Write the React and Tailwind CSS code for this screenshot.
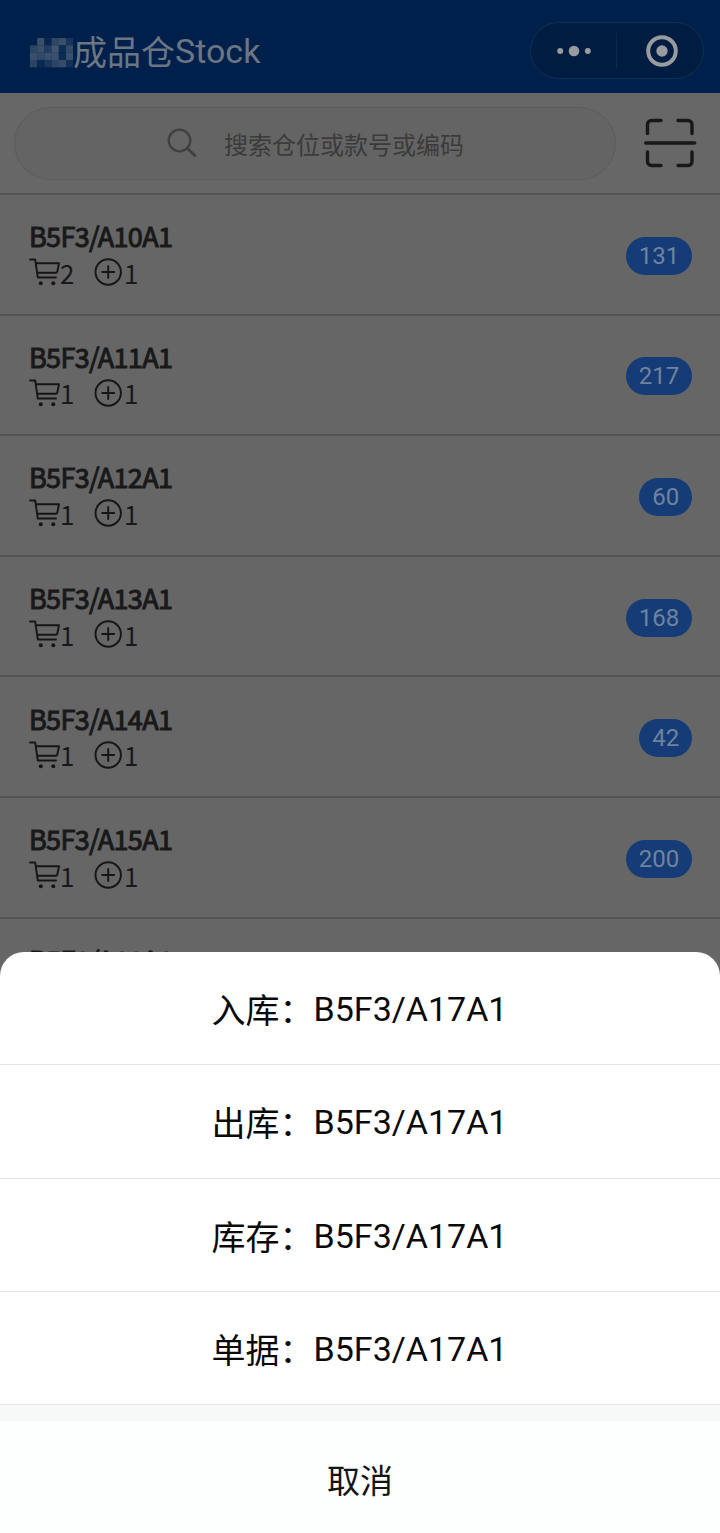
import React from 'react';

const rows = [
  { code: 'B5F3/A10A1', cart: 2, add: 1, total: 131 },
  { code: 'B5F3/A11A1', cart: 1, add: 1, total: 217 },
  { code: 'B5F3/A12A1', cart: 1, add: 1, total: 60 },
  { code: 'B5F3/A13A1', cart: 1, add: 1, total: 168 },
  { code: 'B5F3/A14A1', cart: 1, add: 1, total: 42 },
  { code: 'B5F3/A15A1', cart: 1, add: 1, total: 200 },
  { code: 'B5F3/A16A1', cart: 1, add: 1, total: 96 },
];

const actions = ['入库', '出库', '库存', '单据'];

// Mosaic cells hiding the company name: [column, row, colour]
const mosaic = [
  [1, 0, '#3a5069'], [2, 0, '#0a2650'], [3, 0, '#2f4663'], [4, 0, '#3a5069'], [5, 0, '#17345b'],
  [0, 1, '#2c4562'], [1, 1, '#3a5069'], [2, 1, '#223d60'], [3, 1, '#40556e'], [4, 1, '#0f2c57'], [5, 1, '#334b66'],
  [0, 2, '#3a5069'], [1, 2, '#33496a'], [2, 2, '#3b506b'], [3, 2, '#3b506b'], [4, 2, '#0d2a55'], [5, 2, '#3a5069'],
  [0, 3, '#2a4463'], [1, 3, '#0b2852'], [2, 3, '#1a365b'], [3, 3, '#2d4564'], [4, 3, '#354b68'], [5, 3, '#12305a'],
];

function Mosaic() {
  return (
    <svg className="mt-1 h-[30px] w-[43px]" viewBox="0 0 43 30">
      {mosaic.map(([x, y, fill]) => (
        <rect key={`${x}-${y}`} x={x * 7.2} y={y * 7.3} width="7.3" height="7.4" fill={fill} />
      ))}
    </svg>
  );
}

function CartIcon() {
  return (
    <svg className="h-[28px] w-[32px]" viewBox="0 0 32 28" fill="none" stroke="#161616" strokeWidth="1.9" strokeLinecap="round" strokeLinejoin="round">
      <path d="M1 1.500h5.200l2.600 18h18.200M6.700 5.200h23.300l-1.700 8.300a1.500 1.500 0 0 1-1.500 1.200H8.100" />
      <circle cx="11.800" cy="25.200" r="2" fill="#161616" stroke="none" />
      <circle cx="24.300" cy="25.200" r="2" fill="#161616" stroke="none" />
    </svg>
  );
}

function PlusIcon() {
  return (
    <svg className="h-[28px] w-[28px]" viewBox="0 0 28 28" fill="none" stroke="#161616" strokeWidth="1.9" strokeLinecap="round">
      <circle cx="14.200" cy="14" r="12.700" />
      <path d="M14.200 8v12M8.200 14h12" />
    </svg>
  );
}

function ScanIcon() {
  return (
    <svg className="mt-0.5 h-[52px] w-[54px]" viewBox="0 0 54 52" fill="none" stroke="#171918" strokeWidth="3.4" strokeLinecap="round">
      <path d="M3.5 15.5V6.5a4 4 0 0 1 4-4h9.5M34 2.500h10a4 4 0 0 1 4 4v9M3.500 34v9.500a4 4 0 0 0 4 4h9.500M34 47.500h10a4 4 0 0 0 4-4V34M1.700 25h49" />
    </svg>
  );
}

export default function App() {
  return (
    <div className="relative flex h-[1533px] w-[720px] flex-col overflow-hidden bg-[#666666] font-['Noto_Sans_CJK_SC',sans-serif]">
      <header className="flex h-[93px] shrink-0 items-start bg-[#00204c] pl-[30px] pr-4">
        <div className="flex flex-1 items-center pt-[27px]">
          <Mosaic />
          <h1 className="font-[Roboto,sans-serif] text-[34px] leading-[48px] text-[#6b7682]">
            <span className="align-[-2px] font-['Noto_Sans_CJK_SC',sans-serif] leading-none">成品仓</span>Stock
          </h1>
        </div>
        <div className="mt-[22px] flex h-[57px] w-[174px] items-center rounded-full border border-[#0d3352] bg-[#001c40]">
          <div className="flex w-[85px] items-center justify-center">
            <svg className="h-3 w-9" viewBox="0 0 36 12" fill="#989ba0">
              <circle cx="4.200" cy="6" r="3" />
              <circle cx="18" cy="6" r="5.300" />
              <circle cx="31.800" cy="6" r="3" />
            </svg>
          </div>
          <div className="h-9 w-px bg-[#092b4b]" />
          <div className="flex flex-1 items-center justify-center pl-[4px]">
            <svg className="h-8 w-8" viewBox="0 0 32 32">
              <circle cx="16" cy="16" r="13.800" fill="none" stroke="#989ba0" strokeWidth="4" />
              <circle cx="16" cy="16" r="5.700" fill="#989ba0" />
            </svg>
          </div>
        </div>
      </header>

      <div className="flex h-[102px] shrink-0 items-center border-b-2 border-[#535353] bg-[#676767] pl-3.5 pr-[22px]">
        <div className="flex h-[73px] w-[602px] items-center rounded-full border border-[#5c5c5c] bg-[#646464] pl-[151px]">
          <svg className="h-8 w-8" viewBox="0 0 32 32" fill="none" stroke="#404040" strokeWidth="2.200" strokeLinecap="round">
            <circle cx="13.500" cy="13.500" r="10.800" />
            <path d="m21.500 21.500 7.300 7" strokeWidth="3" />
          </svg>
          <span className="ml-[26px] pt-0.5 text-[24px] leading-9 text-[#3b3b3b]">搜索仓位或款号或编码</span>
        </div>
        <div className="ml-auto">
          <ScanIcon />
        </div>
      </div>

      <main className="flex flex-col">
        {rows.map((row) => (
          <div key={row.code} className="flex h-[120.600px] shrink-0 items-center justify-between border-b-2 border-[#535353] pl-[29px] pr-7">
            <div className="flex flex-col">
              <div className="-mt-px text-[27px] leading-[37px] tracking-[-0.650px] text-[#191919] [-webkit-text-stroke:1px_#191919]">{row.code}</div>
              <div className="flex h-9 items-center text-[26px] leading-9 text-[#191919]">
                <CartIcon />
                <span className="-ml-px w-[34px] pt-px">{row.cart}</span>
                <PlusIcon />
                <span className="ml-0.5 pt-px">{row.add}</span>
              </div>
            </div>
            <span className="mt-[3px] flex h-[38px] min-w-[52px] items-center justify-center rounded-full bg-[#153c76] px-[12.800px] font-[Roboto,sans-serif] text-[24px] text-[#70839d]">{row.total}</span>
          </div>
        ))}
      </main>

      <section className="absolute inset-x-0 bottom-0 flex h-[581px] flex-col overflow-hidden rounded-t-[24px] bg-white font-[Roboto,sans-serif] text-[34px] leading-[50px] text-[#0a0a0a]">
        {actions.map((action) => (
          <button key={action} className="flex h-[113.300px] shrink-0 items-center justify-center border-b border-[#e4e4e4] pr-px pt-0.5">
            <span>
              <span className="align-[-2px] font-['Noto_Sans_CJK_SC',sans-serif] leading-none">{action}：</span>B5F3/A17A1
            </span>
          </button>
        ))}
        <div className="h-4 shrink-0 bg-[#f7f8f8]" />
        <button className="flex flex-1 items-center justify-center bg-[#fdfefe] pt-[3px] font-['Noto_Sans_CJK_SC',sans-serif] text-[33px] text-[#151515]">取消</button>
      </section>
    </div>
  );
}
